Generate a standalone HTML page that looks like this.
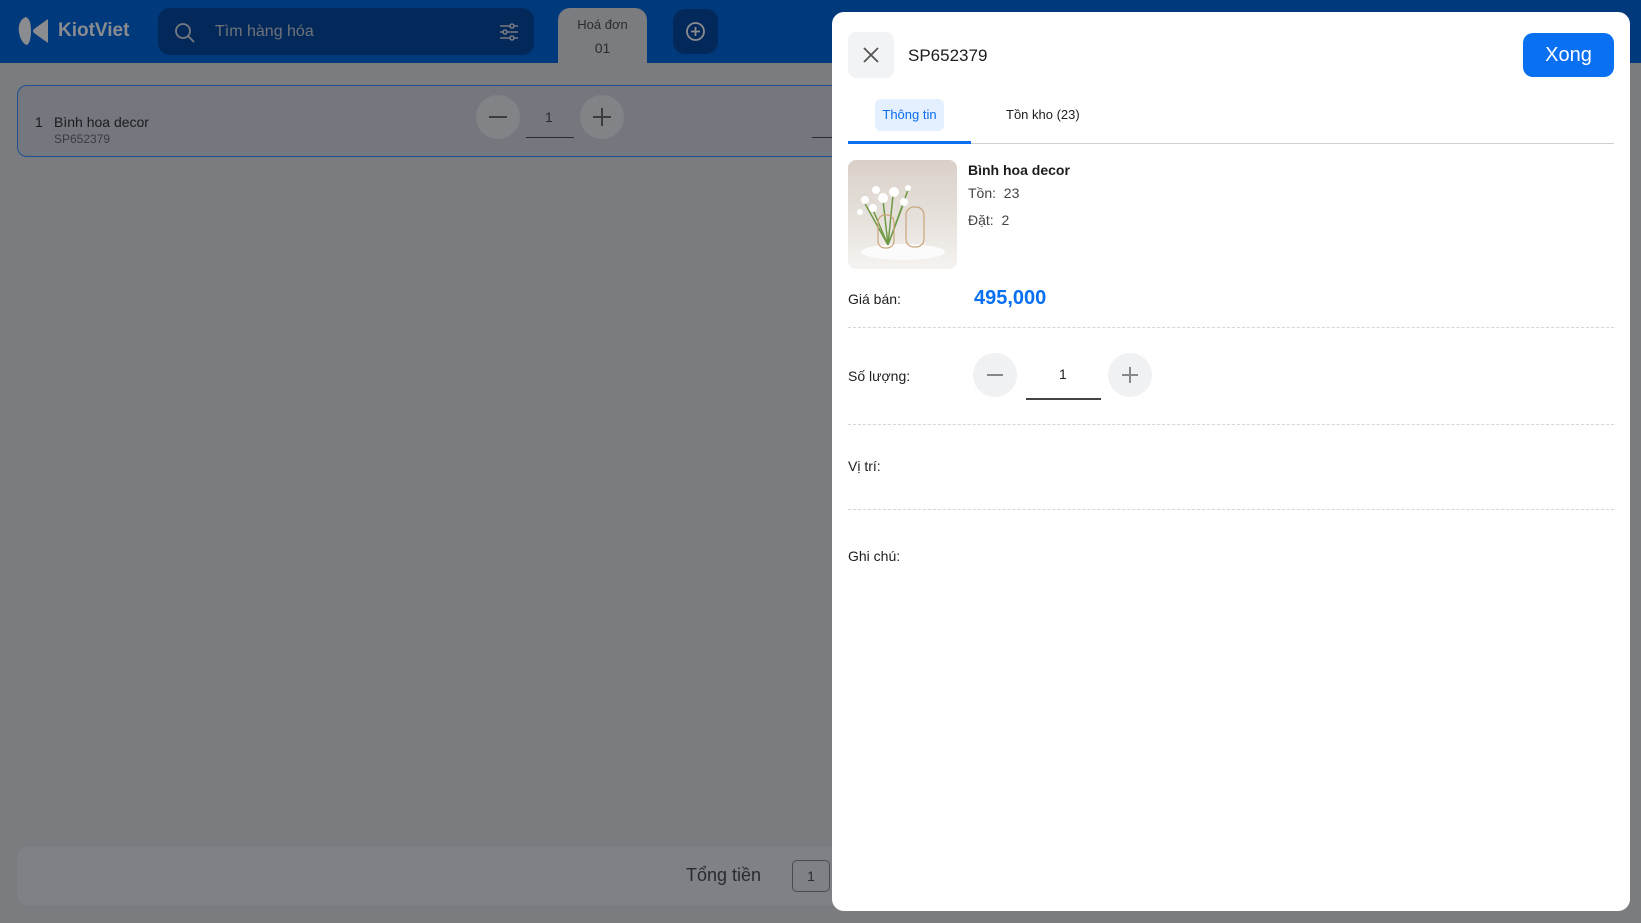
<!DOCTYPE html>
<html><head><meta charset="utf-8"><style>
*{box-sizing:border-box;margin:0;padding:0}
body{width:1641px;height:923px;overflow:hidden;position:relative;background:#7a7c80;font-family:"Liberation Sans","DejaVu Sans",sans-serif;color:#1d1d1f}
.abs{position:absolute}
.top{left:0;top:0;width:1641px;height:63px;background:#003a7c}
.content{left:0;top:63px;width:1641px;height:860px;background:#7b7c80;border-top-left-radius:18px}
.search{left:158px;top:8px;width:376px;height:47px;background:#03295a;border-radius:12px}
.tab{left:558px;top:8px;width:89px;height:60px;background:#7b7c80;border-radius:12px 12px 0 0;text-align:center;color:#2b2d30}
.circ{border-radius:50%}
.dash{left:848px;width:766px;border-top:1.5px dashed #d6d6d6;height:0}
.lbl{left:848px;font-size:14px;color:#1d1d1f}
</style></head><body>
<div class="abs top"></div>
<div class="abs content"></div>
<svg class="abs" style="left:18px;top:16px" width="32" height="30" viewBox="0 0 32 30"><path d="M8 1 C2 3 0 10 1 16 C2 23 5 28 9 29 C12 27 13 21 13 15 C13 8 12 3 8 1Z" fill="#8a8c90"/><path d="M30 3 L16 13 Q14 15 16 17 L30 27 Z" fill="#8a8c90"/></svg>
<div class="abs" style="left:58px;top:20px;font-size:19px;font-weight:bold;color:#8a8c90">KiotViet</div>
<div class="abs search"></div>
<svg class="abs" style="left:174px;top:22px" width="22" height="22" viewBox="0 0 22 22"><circle cx="9" cy="9" r="7" fill="none" stroke="#777a80" stroke-width="1.8"/><path d="M14 14 L20 20" stroke="#777a80" stroke-width="1.8"/></svg>
<div class="abs" style="left:215px;top:23px;font-size:16px;color:#6f7379">Tìm hàng hóa</div>
<svg class="abs" style="left:498px;top:22px" width="22" height="20" viewBox="0 0 22 20"><g stroke="#777a80" stroke-width="1.6" fill="#03295a"><path d="M2 4H20M2 10H20M2 16H20"/><circle cx="14" cy="4" r="2"/><circle cx="7" cy="10" r="2"/><circle cx="14" cy="16" r="2"/></g></svg>
<div class="abs tab"><div style="margin-top:9px;font-size:13px">Hoá đơn</div><div style="margin-top:8px;font-size:14px">01</div></div>
<div class="abs" style="left:673px;top:9px;width:45px;height:45px;background:#03295a;border-radius:12px"></div>
<svg class="abs" style="left:685px;top:21px" width="21" height="21" viewBox="0 0 21 21"><circle cx="10.5" cy="10.5" r="8.5" fill="none" stroke="#8a8c90" stroke-width="1.8"/><path d="M10.5 6V15M6 10.5H15" stroke="#8a8c90" stroke-width="1.8"/></svg>
<div class="abs" style="left:17px;top:85px;width:830px;height:72px;border:1.5px solid #1f4f8f;border-radius:10px;background:#74777e"></div>
<div class="abs" style="left:35px;top:114px;font-size:14px;color:#1a1b1d">1</div>
<div class="abs" style="left:54px;top:114px;font-size:14px;color:#1a1b1d">Bình hoa decor</div>
<div class="abs" style="left:54px;top:132px;font-size:12px;color:#3a3c40">SP652379</div>
<div class="abs circ" style="left:476px;top:95px;width:44px;height:44px;background:#818387"></div>
<div class="abs" style="left:489px;top:116px;width:18px;height:2px;background:#3b3d40"></div>
<div class="abs" style="left:545px;top:109px;font-size:14px;color:#2a2b2e">1</div>
<div class="abs" style="left:526px;top:137px;width:48px;height:1px;background:#2a2b2e"></div>
<div class="abs circ" style="left:580px;top:95px;width:44px;height:44px;background:#818387"></div>
<div class="abs" style="left:593px;top:116px;width:18px;height:2px;background:#3b3d40"></div>
<div class="abs" style="left:601px;top:108px;width:2px;height:18px;background:#3b3d40"></div>
<div class="abs" style="left:812px;top:137px;width:30px;height:1px;background:#2a2b2e"></div>
<div class="abs" style="left:17px;top:847px;width:830px;height:58px;background:#808186;border-radius:10px"></div>
<div class="abs" style="left:686px;top:865px;font-size:18px;color:#2a2b2e">Tổng tiền</div>
<div class="abs" style="left:792px;top:860px;width:38px;height:32px;border:1px solid #4a4c50;border-radius:5px;font-size:14px;text-align:center;line-height:30px;color:#2a2b2e">1</div>
<div class="abs" style="left:832px;top:12px;width:798px;height:899px;background:#fff;border-radius:12px"></div>
<div class="abs" style="left:848px;top:32px;width:46px;height:46px;background:#f2f3f4;border-radius:8px"></div>
<svg class="abs" style="left:862px;top:46px" width="18" height="18" viewBox="0 0 18 18"><path d="M2 2L16 16M16 2L2 16" stroke="#555" stroke-width="1.8"/></svg>
<div class="abs" style="left:908px;top:46px;font-size:17px;color:#1d1d1f">SP652379</div>
<div class="abs" style="left:1523px;top:33px;width:91px;height:44px;background:#0a70f2;border-radius:10px;color:#fff;font-size:20px;text-align:center;line-height:44px">Xong</div>
<div class="abs" style="left:875px;top:99px;width:69px;height:32px;background:#e4efff;border-radius:6px;color:#0a6ff0;font-size:13px;text-align:center;line-height:32px">Thông tin</div>
<div class="abs" style="left:1006px;top:107px;font-size:13px;color:#1d1d1f">Tồn kho (23)</div>
<div class="abs" style="left:848px;top:143px;width:766px;height:1px;background:#d0d0d0"></div>
<div class="abs" style="left:848px;top:141px;width:123px;height:3px;background:#0a70f2"></div>
<svg class="abs" style="left:848px;top:160px;border-radius:8px" width="109" height="109" viewBox="0 0 109 109"><defs><linearGradient id="g" x1="0" y1="0" x2="0" y2="1"><stop offset="0" stop-color="#d9d0c8"/><stop offset="0.6" stop-color="#e8e3de"/><stop offset="1" stop-color="#f5f3f1"/></linearGradient></defs><rect width="109" height="109" fill="url(#g)"/><ellipse cx="55" cy="92" rx="42" ry="8" fill="#fbfbfb"/><g stroke="#6f9a45" stroke-width="1.5"><path d="M40 85L35 40M40 85L45 35M40 85L55 45M40 85L25 50M40 85L15 40M40 85L60 30"/></g><g fill="#fff"><circle cx="35" cy="38" r="5"/><circle cx="46" cy="32" r="5"/><circle cx="56" cy="42" r="4"/><circle cx="25" cy="48" r="4"/><circle cx="17" cy="40" r="4"/><circle cx="60" cy="28" r="3"/><circle cx="28" cy="30" r="4"/><circle cx="12" cy="52" r="3"/></g><rect x="30" y="55" width="16" height="33" rx="7" fill="none" stroke="#c9a57a" stroke-width="1.2"/><rect x="58" y="47" width="18" height="40" rx="8" fill="none" stroke="#c9a57a" stroke-width="1.2"/></svg>
<div class="abs" style="left:968px;top:162px;font-size:14px;font-weight:bold;color:#1d1d1f">Bình hoa decor</div>
<div class="abs" style="left:968px;top:185px;font-size:14px;color:#444">Tồn:&nbsp; 23</div>
<div class="abs" style="left:968px;top:212px;font-size:14px;color:#444">Đặt:&nbsp; 2</div>
<div class="abs lbl" style="top:291px">Giá bán:</div>
<div class="abs" style="left:974px;top:287px;font-size:20px;font-weight:bold;color:#0a70f2">495,000</div>
<div class="abs dash" style="top:327px"></div>
<div class="abs lbl" style="top:368px">Số lượng:</div>
<div class="abs circ" style="left:973px;top:353px;width:44px;height:44px;background:#f0f1f2"></div>
<div class="abs" style="left:987px;top:374px;width:16px;height:2px;background:#888"></div>
<div class="abs" style="left:1059px;top:366px;font-size:14px;color:#222">1</div>
<div class="abs" style="left:1026px;top:398px;width:75px;height:1.5px;background:#444"></div>
<div class="abs circ" style="left:1108px;top:353px;width:44px;height:44px;background:#f0f1f2"></div>
<div class="abs" style="left:1122px;top:374px;width:16px;height:2px;background:#888"></div>
<div class="abs" style="left:1129px;top:367px;width:2px;height:16px;background:#888"></div>
<div class="abs dash" style="top:424px"></div>
<div class="abs lbl" style="top:458px">Vị trí:</div>
<div class="abs dash" style="top:509px"></div>
<div class="abs lbl" style="top:548px">Ghi chú:</div>
</body></html>
